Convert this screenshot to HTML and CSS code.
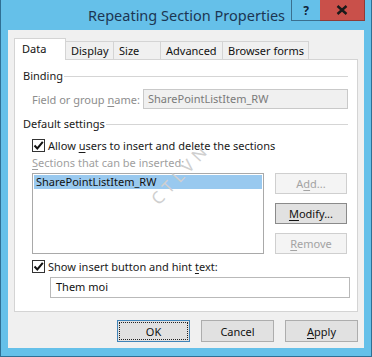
FILE: index.html
```html
<!DOCTYPE html>
<html>
<head>
<meta charset="utf-8">
<link rel="stylesheet" href="styles.css">
</head>
<body>
<div class="window">
  <div class="titlebar">
    <div class="title">Repeating Section Properties</div>
    <div class="caption-btns">
      <div class="cbtn help">?</div>
      <div class="cbtn close">
        <svg width="12" height="10" viewBox="0 0 12 10"><path d="M1.5 1 L10.5 9 M10.5 1 L1.5 9" stroke="#1a1a1a" stroke-width="2.4"/></svg>
      </div>
    </div>
  </div>
  <div class="client">
    <div class="tabs">
      <div class="tab active">Data</div>
      <div class="tab">Display</div>
      <div class="tab">Size</div>
      <div class="tab">Advanced</div>
      <div class="tab">Browser forms</div>
    </div>
    <div class="panel">
      <div class="group"><span>Binding</span><i class="rule"></i></div>
      <div class="field-row">
        <span class="disabled-label">Field or group <u>n</u>ame:</span>
        <div class="textbox disabled">SharePointListItem_RW</div>
      </div>
      <div class="group g2"><span>Default settings</span><i class="rule"></i></div>
      <div class="check-row c1">
        <span class="checkbox"><svg width="11" height="11" viewBox="0 0 11 11"><path d="M1.5 5.5 L4.3 8.5 L9.8 1.8" fill="none" stroke="#111" stroke-width="2"/></svg></span>
        <span>Allow <u>u</u>sers to insert and delete the sections</span>
      </div>
      <div class="sub-label"><u>S</u>ections that can be inserted:</div>
      <div class="list-area">
        <div class="listbox">
          <div class="list-item">SharePointListItem_RW</div>
        </div>
        <div class="side-btns">
          <div class="btn dis">A<u>d</u>d...</div>
          <div class="btn def"><u>M</u>odify...</div>
          <div class="btn dis"><u>R</u>emove</div>
        </div>
      </div>
      <div class="check-row c2">
        <span class="checkbox"><svg width="11" height="11" viewBox="0 0 11 11"><path d="M1.5 5.5 L4.3 8.5 L9.8 1.8" fill="none" stroke="#111" stroke-width="2"/></svg></span>
        <span>Show insert button and hint <u>t</u>ext:</span>
      </div>
      <div class="textbox hint">Them moi</div>
      <span class="watermark">CTLVN</span>
    </div>
    <div class="footer">
      <div class="btn fbtn ok"><span class="focus">OK</span></div>
      <div class="btn fbtn">Cancel</div>
      <div class="btn fbtn"><u>A</u>pply</div>
    </div>
  </div>
</div>
</body>
</html>
```

FILE: styles.css
```css
* { box-sizing: border-box; }
html, body { margin: 0; padding: 0; }
body {
  width: 372px;
  height: 357px;
  overflow: hidden;
  font-family: "Noto Sans", "Open Sans", sans-serif;
  font-size: 11px;
  color: #1a1a1a;
}
u { text-decoration: underline; text-underline-offset: 2px; }

.window {
  width: 372px;
  height: 357px;
  background: #65c0e9;
  border: 1px solid #2f6f94;
  border-top: 0;
  display: flex;
  flex-direction: column;
  align-items: center;
}

.titlebar {
  width: 100%;
  height: 30px;
  flex: none;
  position: relative;
  display: flex;
  justify-content: center;
}
.title {
  font-size: 14.5px;
  color: #1c3653;
  line-height: 30px;
  padding-left: 1px;
}
.caption-btns {
  position: absolute;
  top: 0;
  right: 6px;
  display: flex;
}
.cbtn {
  height: 21px;
  display: flex;
  align-items: center;
  justify-content: center;
}
.help {
  width: 29px;
  border: 1px solid #3a6f8f;
  border-top: 0;
  border-right: 0;
  font-weight: bold;
  font-size: 12px;
  color: #10243a;
  background: #65c0e9;
}
.close {
  width: 45px;
  background: #c9504a;
  border-bottom: 1px solid #8f3b36;
  border-right: 1px solid #8f3b36;
}

.client {
  width: 356px;
  height: 318px;
  background: #f0f0f0;
  padding: 8px 6px 0 6px;
  display: flex;
  flex-direction: column;
}

.tabs {
  display: flex;
  align-items: flex-end;
  height: 21px;
  position: relative;
  z-index: 1;
}
.tab {
  height: 18px;
  border: 1px solid #d4d4d4;
  border-bottom: 0;
  border-left: 0;
  background: #f0f0f0;
  padding: 0 0 0 5px;
  line-height: 17px;
  color: #111;
  white-space: nowrap;
  overflow: hidden;
}
.tab:nth-child(2) { width: 48px; }
.tab:nth-child(3) { width: 47px; }
.tab:nth-child(4) { width: 62px; }
.tab:nth-child(5) { width: 86px; }
.tab.active {
  width: 52px;
  background: #fff;
  border-left: 1px solid #d4d4d4;
  line-height: 19px;
  padding-left: 7px;
  margin-bottom: -1px;
  height: 22px;
}

.panel {
  width: 344px;
  height: 253px;
  background: #fff;
  border: 1px solid #d4d4d4;
  padding: 8px 9px 0 8px;
  display: flex;
  flex-direction: column;
  position: relative;
}

.group {
  display: flex;
  align-items: center;
  height: 16px;
  line-height: 16px;
}
.group .rule {
  flex: 1;
  height: 1px;
  background: #d5d5d5;
  margin-left: 1px;
}
.g2 { margin-top: 7px; }

.field-row {
  display: flex;
  align-items: center;
  margin-top: 5px;
  margin-left: 9px;
}
.disabled-label { color: #8d8d8d; width: 111px; }
.textbox {
  height: 20px;
  border: 1px solid #b9b9b9;
  background: #fff;
  line-height: 18px;
  padding-left: 4px;
  color: #111;
}
.textbox.disabled {
  flex: 1;
  background: #f0f0f0;
  border-color: #c9c9c9;
  color: #7a7a7a;
}

.check-row {
  display: flex;
  align-items: center;
  height: 16px;
  margin-left: 9px;
}
.c1 { margin-top: 5px; }
.c2 { margin-top: 4px; }
.checkbox {
  width: 13px;
  height: 13px;
  border: 1px solid #333;
  background: #fff;
  margin-right: 3px;
  display: flex;
  align-items: center;
  justify-content: center;
}

.sub-label {
  margin-top: 2px;
  margin-left: 9px;
  height: 16px;
  line-height: 16px;
  color: #a0a0a0;
}

.list-area {
  margin-top: 2px;
  margin-left: 9px;
  display: flex;
  gap: 11px;
  height: 81px;
}
.listbox {
  width: 232px;
  height: 81px;
  border: 1px solid #a9a9a9;
  background: #fff;
  padding: 1px;
}
.list-item {
  background: #99c9ef;
  height: 14px;
  line-height: 14px;
  padding-left: 2px;
  color: #111;
}
.side-btns {
  display: flex;
  flex-direction: column;
  gap: 9px;
  width: 72px;
}
.btn {
  height: 21px;
  border: 1px solid #adadad;
  background: #e1e1e1;
  display: flex;
  align-items: center;
  justify-content: center;
  color: #111;
}
.btn.dis {
  background: #f4f4f4;
  border-color: #cfcfcf;
  color: #a3a3a3;
}
.btn.def { border-color: #8a8a8a; }

.textbox.hint {
  margin-top: 3px;
  margin-left: 27px;
  margin-right: -2px;
  height: 21px;
  padding-left: 5px;
}

.watermark {
  position: absolute;
  left: 146px;
  top: 130px;
  height: 18px;
  line-height: 18px;
  font-size: 17px;
  letter-spacing: 5px;
  color: #cfcfcf;
  transform: rotate(-47deg);
  transform-origin: left bottom;
}

.footer {
  margin-top: 8px;
  display: flex;
  justify-content: flex-end;
  gap: 10px;
}
.fbtn {
  width: 73px;
  height: 22px;
}
.fbtn + .fbtn { margin-left: 1px; }
.ok {
  border-color: #3f83b8;
  padding: 1px;
}
.ok .focus {
  width: 100%;
  height: 100%;
  border: 1px dotted #222;
  display: flex;
  align-items: center;
  justify-content: center;
}
```
